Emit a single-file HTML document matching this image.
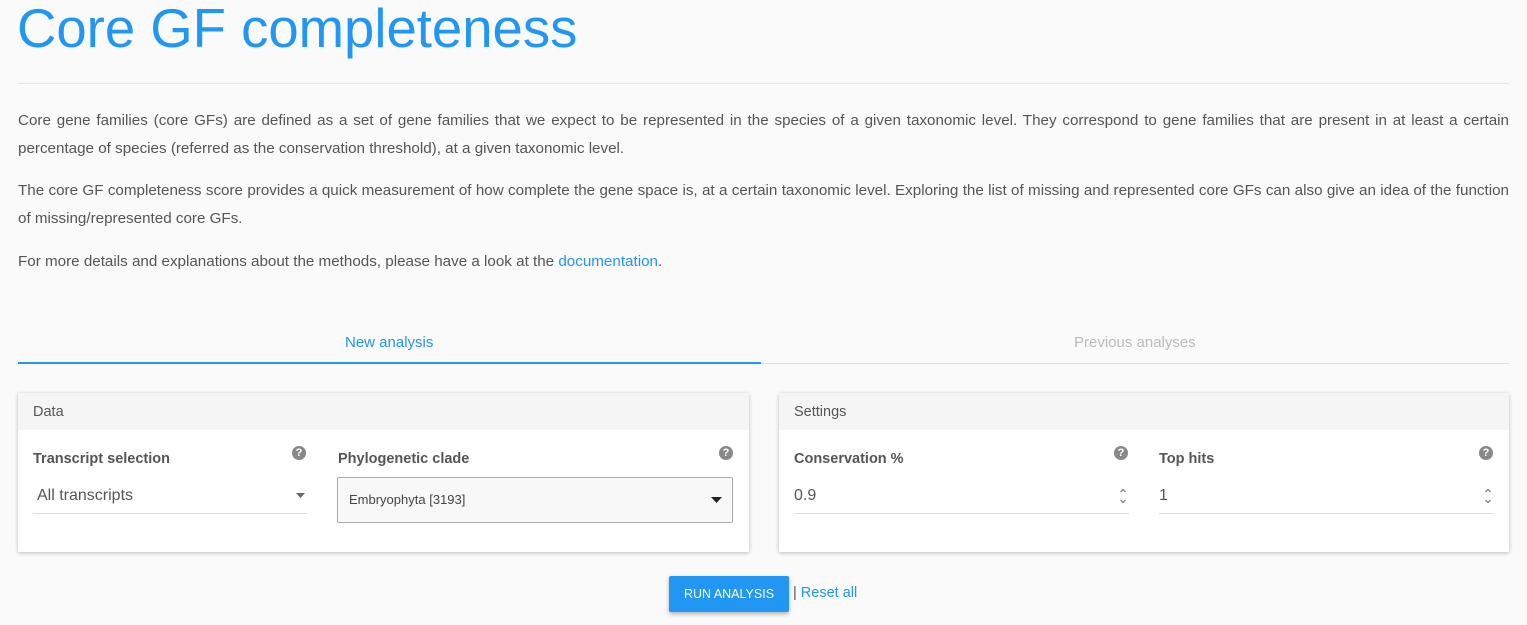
<!DOCTYPE html>
<html><head><meta charset="utf-8"><style>
body{margin:0;background:#fafafa;font-family:"Liberation Sans",sans-serif;color:#555;width:1527px;height:625px;overflow:hidden;position:relative}
.a{position:absolute}
h1{position:absolute;left:17px;top:-3px;margin:0;font-weight:300;font-size:54.5px;color:#2196f3;white-space:nowrap}
.hr{left:18px;width:1491px;top:83px;height:1px;background:#e6e6e6}
p{position:absolute;left:18px;width:1491px;margin:0;font-size:15.2px;line-height:28px;white-space:nowrap}
p .j{display:block;text-align:justify;text-align-last:justify}
a{color:#2196f3;text-decoration:none}
.tab{top:334px;font-size:15px}
.panel{background:#fff;box-shadow:0 1px 4px rgba(0,0,0,.25);top:393px;height:159px}
.ph{height:37px;background:#f5f5f5;font-size:14.5px;line-height:38px;padding-left:15px;color:#555}
.lbl{font-weight:bold;font-size:14.5px;color:#555;top:451px}
.q{width:14px;height:14px;border-radius:50%;background:#888;color:#fff;font-size:11px;font-weight:bold;text-align:center;line-height:14px;top:446px}
.inp{top:485px;height:28px;border-bottom:1px solid #ddd;font-size:16px;line-height:22px;color:#555}
.spin{right:2px;top:2px}
</style></head><body>
<h1>Core GF completeness</h1>
<div class="a hr"></div>
<p style="top:107px"><span class="j">Core gene families (core GFs) are defined as a set of gene families that we expect to be represented in the species of a given taxonomic level. They correspond to gene families that are present in at least a certain</span>percentage of species (referred as the conservation threshold), at a given taxonomic level.</p>
<p style="top:177px"><span class="j">The core GF completeness score provides a quick measurement of how complete the gene space is, at a certain taxonomic level. Exploring the list of missing and represented core GFs can also give an idea of the function</span>of missing/represented core GFs.</p>
<p style="top:248px">For more details and explanations about the methods, please have a look at the <a>documentation</a>.</p>
<div class="a tab" style="left:345px;color:#2196f3">New analysis</div>
<div class="a tab" style="left:1074px;color:#bbb">Previous analyses</div>
<div class="a" style="left:18px;top:362px;width:743px;height:2px;background:#2196f3"></div>
<div class="a" style="left:761px;top:363px;width:748px;height:1px;background:#ddd"></div>

<div class="a panel" style="left:18px;width:731px"><div class="ph">Data</div></div>
<div class="a lbl" style="left:33px">Transcript selection</div>
<div class="a q" style="left:292px">?</div>
<div class="a inp" style="left:33px;width:274px"><span style="margin-left:4px">All transcripts</span><svg class="a" style="right:2px;top:8px" width="9" height="5"><path d="M0 0H9L4.5 5Z" fill="#666"/></svg></div>
<div class="a lbl" style="left:338px">Phylogenetic clade</div>
<div class="a q" style="left:719px">?</div>
<div class="a" style="left:337px;top:477px;width:394px;height:44px;border:1px solid #aaa;border-radius:2px;background:#f8f8f8;font-size:13px;line-height:44px;color:#444"><span style="margin-left:11px">Embryophyta [3193]</span><svg class="a" style="right:10px;top:19px" width="11" height="6"><path d="M0 0H11L5.5 6Z" fill="#222"/></svg></div>

<div class="a panel" style="left:779px;width:730px"><div class="ph">Settings</div></div>
<div class="a lbl" style="left:794px">Conservation %</div>
<div class="a q" style="left:1114px">?</div>
<div class="a inp" style="left:794px;width:335px">0.9<svg class="a spin" width="8" height="18"><path d="M1.5 5L4 2.5L6.5 5M1.5 13L4 15.5L6.5 13" stroke="#666" fill="none"/></svg></div>
<div class="a lbl" style="left:1159px">Top hits</div>
<div class="a q" style="left:1479px">?</div>
<div class="a inp" style="left:1159px;width:335px">1<svg class="a spin" width="8" height="18"><path d="M1.5 5L4 2.5L6.5 5M1.5 13L4 15.5L6.5 13" stroke="#666" fill="none"/></svg></div>

<div class="a" style="left:669px;top:576px;width:120px;height:36px;background:#2196f3;border-radius:2px;box-shadow:0 2px 4px rgba(0,0,0,.3);color:#fff;font-size:12.5px;line-height:36px;text-align:center">RUN ANALYSIS</div>
<div class="a" style="left:793px;top:585px;font-size:14.5px;color:#555">| <a>Reset all</a></div>
</body></html>
